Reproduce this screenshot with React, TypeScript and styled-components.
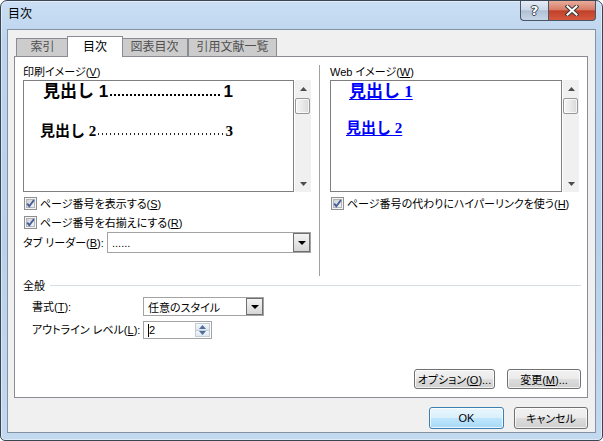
import React from "react";
import styled, { createGlobalStyle, css } from "styled-components";

const Global = createGlobalStyle`
  html, body { margin: 0; padding: 0; background: #ffffff; }
  body {
    font-family: "Liberation Sans", "Noto Sans CJK JP", sans-serif;
    font-size: 11px;
    color: #000;
  }
  * { box-sizing: border-box; }
`;

const Window = styled.div`
  width: 603px;
  height: 441px;
  display: flex;
  flex-direction: column;
  border: 1px solid #3a4654;
  border-radius: 7px 7px 5px 5px;
  background: linear-gradient(180deg, #cadff4 0%, #bcd4ee 9%, #b9d1ea 55%, #c3d9f0 100%);
  box-shadow: inset 0 0 0 1px rgba(255, 255, 255, 0.45);
  overflow: hidden;
`;

const TitleBar = styled.div`
  height: 28px;
  flex-shrink: 0;
  display: flex;
  align-items: flex-start;
`;

const Title = styled.div`
  flex: 1;
  padding: 6px 0 0 7px;
  line-height: 14px;
  font-size: 12px;
  font-feature-settings: "palt";
`;

const CaptionButtons = styled.div`
  display: flex;
  margin-right: 6px;
`;

const CaptionButton = styled.div<{ $kind: "help" | "close" }>`
  height: 20px;
  display: flex;
  align-items: center;
  justify-content: center;
  border: 1px solid #4b5563;
  border-top: none;
  ${(p) =>
    p.$kind === "help"
      ? css`
          width: 28px;
          border-right: none;
          border-radius: 0 0 0 4px;
          background: linear-gradient(180deg, #e4ecf6 0%, #cdd9e8 45%, #b1c1d5 52%, #c6d5e6 100%);
        `
      : css`
          width: 48px;
          border-radius: 0 0 4px 0;
          background: linear-gradient(180deg, #e9ab9b 0%, #d77e69 45%, #c2402a 52%, #d4583f 100%);
        `}
`;

const HelpGlyph = styled.span`
  font-family: "DejaVu Sans", sans-serif;
  font-weight: bold;
  font-size: 13px;
  line-height: 13px;
  color: #ffffff;
  text-shadow: 1px 0 0 #3b4654, -1px 0 0 #3b4654, 0 1px 0 #3b4654, 0 -1px 0 #3b4654;
`;

const Client = styled.div`
  flex: 1;
  margin: 0 6px 7px 6px;
  border: 1px solid #8393a4;
  background: #f0f0f0;
  display: flex;
  flex-direction: column;
  padding: 6px 7px 3px 6px;
`;

const TabRow = styled.div`
  display: flex;
  align-items: flex-end;
  height: 20px;
  padding-left: 2px;
  position: relative;
  z-index: 1;
  font-feature-settings: "palt";
`;

const Tab = styled.div<{ $active?: boolean; $w: number }>`
  width: ${(p) => p.$w}px;
  height: 18px;
  border: 1px solid #898c95;
  border-bottom: none;
  background: #cccccc;
  color: #505050;
  text-align: center;
  line-height: 17px;
  font-size: 12px;
  ${(p) =>
    p.$active &&
    css`
      height: 21px;
      margin: 0 -2px -1px -2px;
      background: #ffffff;
      color: #000;
      line-height: 20px;
      position: relative;
      z-index: 2;
    `}
`;

const Panel = styled.div`
  flex: 1;
  background: #ffffff;
  border: 1px solid #898c95;
  display: flex;
  flex-direction: column;
  padding: 8px 6px 8px 8px;
`;

const Upper = styled.div`
  display: flex;
  height: 211px;
`;

const Column = styled.div<{ $w: number }>`
  width: ${(p) => p.$w}px;
  display: flex;
  flex-direction: column;
`;

const Separator = styled.div`
  width: 1px;
  background: #a0a0a0;
  margin: 0 10px 0 8px;
`;

const FieldLabel = styled.div`
  height: 15px;
  line-height: 15px;
  white-space: nowrap;
  font-feature-settings: "palt";
`;

const PreviewRow = styled.div`
  display: flex;
  height: 112px;
  gap: 1px;
`;

const PreviewBox = styled.div`
  flex: 1;
  border: 1px solid #7f7f7f;
  background: #ffffff;
  padding-top: 1px;
  overflow: hidden;
`;

const TocLine = styled.div<{ $level: 1 | 2 }>`
  display: flex;
  height: 20px;
  line-height: 20px;
  font-weight: bold;
  white-space: nowrap;
  ${(p) =>
    p.$level === 1
      ? css`
          margin-left: 19px;
          width: 190px;
          font-size: 17px;
          font-family: "Liberation Sans", "Noto Sans CJK JP", sans-serif;
        `
      : css`
          margin-left: 16px;
          width: 193px;
          margin-top: 19px;
          font-size: 15px;
          font-family: "Liberation Serif", "Noto Sans CJK JP", serif;
        `}
`;

const Leader = styled.span<{ $level: 1 | 2 }>`
  flex: 1;
  margin: 0 2px 0 2px;
  background-repeat: repeat-x;
  background-position: 0 12px;
  ${(p) =>
    p.$level === 1
      ? css`
          background-image: linear-gradient(90deg, #000 2px, transparent 2px);
          background-size: 4px 2px;
        `
      : css`
          background-image: linear-gradient(90deg, #222 1.5px, transparent 1.5px);
          background-size: 4px 1.5px;
        `}
`;

const WebLine = styled.div<{ $level: 1 | 2 }>`
  height: 20px;
  line-height: 20px;
  font-weight: bold;
  white-space: nowrap;
  color: #0000ff;
  font-family: "Liberation Serif", "Noto Sans CJK JP", serif;
  ${(p) =>
    p.$level === 1
      ? css`
          margin-left: 18px;
          font-size: 17px;
        `
      : css`
          margin-left: 15px;
          margin-top: 16px;
          font-size: 15px;
        `}
`;

const WebLink = styled.span`
  text-decoration: underline;
  text-underline-offset: 2px;
`;

const ScrollBar = styled.div`
  width: 16px;
  flex-shrink: 0;
  display: flex;
  flex-direction: column;
  background: #f0f0f0;
`;

const ScrollArrow = styled.div`
  height: 17px;
  display: flex;
  align-items: center;
  justify-content: center;
`;

const ScrollThumb = styled.div`
  height: 16px;
  width: 15px;
  margin-top: 1px;
  border: 1px solid #979797;
  border-radius: 2px;
  background: linear-gradient(90deg, #f6f6f6 0%, #e9e9e9 50%, #d9d9d9 100%);
  box-shadow: inset 0 0 0 1px rgba(255, 255, 255, 0.7);
`;

const ScrollTrack = styled.div`
  flex: 1;
`;

const CheckRow = styled.div<{ $mt: number }>`
  display: flex;
  align-items: center;
  gap: 3px;
  height: 14px;
  margin-top: ${(p) => p.$mt}px;
  padding-left: 1px;
  white-space: nowrap;
  font-feature-settings: "palt";
  svg { flex-shrink: 0; }
`;

const InlineRow = styled.div<{ $mt: number; $pl?: number }>`
  display: flex;
  align-items: center;
  margin-top: ${(p) => p.$mt}px;
  padding-left: ${(p) => p.$pl ?? 0}px;
  white-space: nowrap;
  font-feature-settings: "palt";
`;

const RowLabel = styled.div<{ $w: number }>`
  width: ${(p) => p.$w}px;
  flex-shrink: 0;
  line-height: 14px;
`;

const Combo = styled.div<{ $w: number; $h: number }>`
  width: ${(p) => p.$w}px;
  height: ${(p) => p.$h}px;
  flex-shrink: 0;
  border: 1px solid #a3a3a3;
  background: #ffffff;
  display: flex;
  align-items: stretch;
`;

const ComboText = styled.div`
  flex: 1;
  padding-left: 4px;
  display: flex;
  align-items: center;
  font-feature-settings: "palt";
`;

const DropButton = styled.div`
  width: 17px;
  border: 1px solid #6f6f6f;
  background: linear-gradient(180deg, #f3f3f3 0%, #e6e6e6 50%, #d6d6d6 100%);
  display: flex;
  align-items: center;
  justify-content: center;
`;

const Caret = styled.span`
  display: inline-block;
  width: 1px;
  height: 13px;
  background: #000;
`;

const SpinButtons = styled.div`
  width: 15px;
  display: flex;
  flex-direction: column;
  margin: 1px 1px 1px 0;
`;

const SpinHalf = styled.div<{ $top?: boolean }>`
  flex: 1;
  display: flex;
  align-items: center;
  justify-content: center;
  background: linear-gradient(180deg, #f4f7fb 0%, #dfe7f0 100%);
  border: 1px solid #c3ccd6;
  ${(p) => !p.$top && css`border-top: none;`}
`;

const GroupHeader = styled.div`
  display: flex;
  align-items: center;
  height: 14px;
  margin-top: 2px;
  font-feature-settings: "palt";
`;

const GroupLine = styled.div`
  flex: 1;
  height: 1px;
  background: #d5dfe5;
  margin-left: 5px;
`;

const ButtonRow = styled.div<{ $gap: number; $mt?: string }>`
  display: flex;
  justify-content: flex-end;
  gap: ${(p) => p.$gap}px;
  margin-top: ${(p) => p.$mt ?? "0"};
`;

const PushButton = styled.button<{ $w: number; $h: number; $default?: boolean }>`
  width: ${(p) => p.$w}px;
  height: ${(p) => p.$h}px;
  padding: 0;
  white-space: nowrap;
  font-family: "Liberation Sans", "Noto Sans CJK JP", sans-serif;
  font-size: 11px;
  color: #000;
  font-feature-settings: "palt";
  border: 1px solid #707070;
  border-radius: 3px;
  background: linear-gradient(180deg, #f2f2f2 0%, #ebebeb 48%, #dddddd 52%, #cfcfcf 100%);
  box-shadow: inset 0 0 0 1px rgba(255, 255, 255, 0.75);
  ${(p) =>
    p.$default &&
    css`
      border-color: #3c7fb1;
      background: linear-gradient(180deg, #eaf6fd 0%, #d9f0fc 48%, #bee6fd 52%, #a7d9f5 100%);
    `}
`;

const TriUp = ({ color = "#4d4d4d" }: { color?: string }) => (
  <svg width="7" height="4" viewBox="0 0 7 4">
    <polygon points="3.5,0 7,4 0,4" fill={color} />
  </svg>
);

const TriDown = ({ color = "#4d4d4d", w = 7, h = 4 }: { color?: string; w?: number; h?: number }) => (
  <svg width={w} height={h} viewBox={`0 0 ${w} ${h}`}>
    <polygon points={`0,0 ${w},0 ${w / 2},${h}`} fill={color} />
  </svg>
);

const CheckBoxIcon = () => (
  <svg width="13" height="13" viewBox="0 0 13 13">
    <defs>
      <linearGradient id="cbg" x1="0" y1="0" x2="1" y2="1">
        <stop offset="0" stopColor="#cbcfd5" />
        <stop offset="1" stopColor="#f7f7f7" />
      </linearGradient>
    </defs>
    <rect x="0.5" y="0.5" width="12" height="12" fill="#f4f4f4" stroke="#8e8f8f" />
    <rect x="2.5" y="2.5" width="8" height="8" fill="url(#cbg)" stroke="#b0b5bb" />
    <path d="M3.2 6.6 L5.3 9.2 L9.9 3.1" fill="none" stroke="#4a5f97" strokeWidth="1.9" />
  </svg>
);

const CloseIcon = () => (
  <svg width="14" height="11" viewBox="0 0 14 11">
    <path d="M2.5 1.5 L11.5 9.5 M11.5 1.5 L2.5 9.5" stroke="#3b3b3b" strokeWidth="4" strokeLinecap="square" />
    <path d="M2.5 1.5 L11.5 9.5 M11.5 1.5 L2.5 9.5" stroke="#ffffff" strokeWidth="2" strokeLinecap="square" />
  </svg>
);

const Scroll = () => (
  <ScrollBar>
    <ScrollArrow>
      <TriUp />
    </ScrollArrow>
    <ScrollThumb />
    <ScrollTrack />
    <ScrollArrow>
      <TriDown />
    </ScrollArrow>
  </ScrollBar>
);

export default function App() {
  return (
    <>
      <Global />
      <Window>
        <TitleBar>
          <Title>目次</Title>
          <CaptionButtons>
            <CaptionButton $kind="help">
              <HelpGlyph>?</HelpGlyph>
            </CaptionButton>
            <CaptionButton $kind="close">
              <CloseIcon />
            </CaptionButton>
          </CaptionButtons>
        </TitleBar>
        <Client>
          <TabRow>
            <Tab $w={53}>索引</Tab>
            <Tab $w={56} $active>
              目次
            </Tab>
            <Tab $w={67}>図表目次</Tab>
            <Tab $w={89}>引用文献一覧</Tab>
          </TabRow>
          <Panel>
            <Upper>
              <Column $w={288}>
                <FieldLabel>
                  印刷イメージ(<u>V</u>)
                </FieldLabel>
                <PreviewRow>
                  <PreviewBox>
                    <TocLine $level={1}>
                      <span>見出し 1</span>
                      <Leader $level={1} />
                      <span>1</span>
                    </TocLine>
                    <TocLine $level={2}>
                      <span>見出し 2</span>
                      <Leader $level={2} />
                      <span>3</span>
                    </TocLine>
                  </PreviewBox>
                  <Scroll />
                </PreviewRow>
                <CheckRow $mt={4}>
                  <CheckBoxIcon />
                  <span>
                    ページ番号を表示する(<u>S</u>)
                  </span>
                </CheckRow>
                <CheckRow $mt={5}>
                  <CheckBoxIcon />
                  <span>
                    ページ番号を右揃えにする(<u>R</u>)
                  </span>
                </CheckRow>
                <InlineRow $mt={3}>
                  <RowLabel $w={84}>
                    タブ リーダー(<u>B</u>):
                  </RowLabel>
                  <Combo $w={204} $h={21}>
                    <ComboText>......</ComboText>
                    <DropButton>
                      <TriDown color="#000" w={8} h={4} />
                    </DropButton>
                  </Combo>
                </InlineRow>
              </Column>
              <Separator />
              <Column $w={249}>
                <FieldLabel>
                  Web イメージ(<u>W</u>)
                </FieldLabel>
                <PreviewRow>
                  <PreviewBox>
                    <WebLine $level={1}>
                      <WebLink>見出し 1</WebLink>
                    </WebLine>
                    <WebLine $level={2}>
                      <WebLink>見出し 2</WebLink>
                    </WebLine>
                  </PreviewBox>
                  <Scroll />
                </PreviewRow>
                <CheckRow $mt={4}>
                  <CheckBoxIcon />
                  <span>
                    ページ番号の代わりにハイパーリンクを使う(<u>H</u>)
                  </span>
                </CheckRow>
              </Column>
            </Upper>
            <GroupHeader>
              <span>全般</span>
              <GroupLine />
            </GroupHeader>
            <InlineRow $mt={5} $pl={9}>
              <RowLabel $w={111}>
                書式(<u>T</u>):
              </RowLabel>
              <Combo $w={121} $h={19}>
                <ComboText>任意のスタイル</ComboText>
                <DropButton>
                  <TriDown color="#000" w={8} h={4} />
                </DropButton>
              </Combo>
            </InlineRow>
            <InlineRow $mt={5} $pl={9}>
              <RowLabel $w={111}>
                アウトライン レベル(<u>L</u>):
              </RowLabel>
              <Combo $w={69} $h={18}>
                <ComboText>
                  <Caret />2
                </ComboText>
                <SpinButtons>
                  <SpinHalf $top>
                    <TriUp color="#4f6f9f" />
                  </SpinHalf>
                  <SpinHalf>
                    <TriDown color="#4f6f9f" />
                  </SpinHalf>
                </SpinButtons>
              </Combo>
            </InlineRow>
            <ButtonRow $gap={12} $mt="auto">
              <PushButton $w={81} $h={20}>
                オプション(<u>O</u>)...
              </PushButton>
              <PushButton $w={74} $h={20}>
                変更(<u>M</u>)...
              </PushButton>
            </ButtonRow>
          </Panel>
          <ButtonRow $gap={10} $mt="9px">
            <PushButton $w={75} $h={22} $default>
              OK
            </PushButton>
            <PushButton $w={74} $h={22}>
              キャンセル
            </PushButton>
          </ButtonRow>
        </Client>
      </Window>
    </>
  );
}
